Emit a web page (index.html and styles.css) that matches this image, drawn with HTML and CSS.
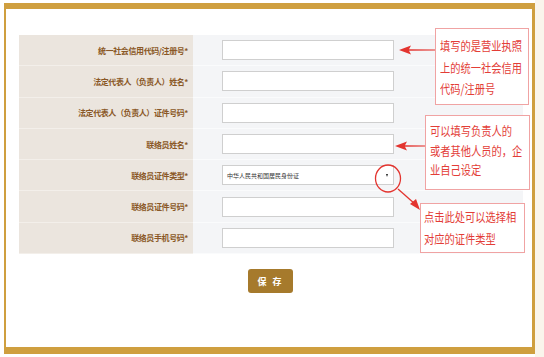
FILE: index.html
```html
<!DOCTYPE html>
<html lang="zh-CN">
<head>
  <meta charset="UTF-8" />
  <title>联络员信息</title>
  <link rel="stylesheet" href="styles.css">
</head>
<body>
  <div class="page">
    <div class="frame">
      <div class="form">
        <div class="row">
          <div class="label">统一社会信用代码/注册号*</div>
          <div class="field"><input type="text" class="text-input" /></div>
        </div>
        <div class="row">
          <div class="label">法定代表人（负责人）姓名*</div>
          <div class="field"><input type="text" class="text-input" /></div>
        </div>
        <div class="row">
          <div class="label">法定代表人（负责人）证件号码*</div>
          <div class="field"><input type="text" class="text-input" /></div>
        </div>
        <div class="row">
          <div class="label">联络员姓名*</div>
          <div class="field"><input type="text" class="text-input" /></div>
        </div>
        <div class="row">
          <div class="label">联络员证件类型*</div>
          <div class="field">
            <div class="select">
              <span>中华人民共和国居民身份证</span>
              <span class="caret"></span>
            </div>
          </div>
        </div>
        <div class="row">
          <div class="label">联络员证件号码*</div>
          <div class="field"><input type="text" class="text-input" /></div>
        </div>
        <div class="row">
          <div class="label">联络员手机号码*</div>
          <div class="field"><input type="text" class="text-input" /></div>
        </div>
      </div>
      <div class="actions">
        <button class="btn-save">保 存</button>
      </div>
    </div>

    <!-- 标注 -->
    <svg class="marks" width="544" height="357" viewBox="0 0 544 357">
      <polygon fill="#e3342f" points="399,50 411,45.5 409,49.3 435,49.6 435,50.6 409,50.8 411,54.5" />
      <polygon fill="#e3342f" points="395,146 407,141.5 405,145.3 425,145.6 425,146.6 405,146.8 407,150.5" />
      <ellipse cx="388" cy="178.5" rx="12.5" ry="13.5" fill="none" stroke="#e3342f" stroke-width="1.3" />
      <line x1="398" y1="189" x2="415" y2="204" stroke="#e3342f" stroke-width="1.3" />
      <polygon fill="#e3342f" points="420,210 410,204 416,199" />
    </svg>

    <div class="note note-1"><span>填写的是营业执照<br>上的统一社会信用<br>代码/注册号</span></div>
    <div class="note note-2"><span>可以填写负责人的<br>或者其他人员的，企<br>业自己设定</span></div>
    <div class="note note-3"><span>点击此处可以选择相<br>对应的证件类型</span></div>
  </div>
</body>
</html>
```

FILE: styles.css
```css
* {
  box-sizing: border-box;
}

body {
  margin: 0;
  background-color: #faf5ec;
  font-family: "Noto Sans CJK SC", "Noto Sans", sans-serif;
}

.page {
  position: relative;
  width: 535px;
  height: 357px;
  background-color: #fff;
  padding: 3px 0 0 4px;
}

.frame {
  width: 531px;
  height: 351px;
  border-style: solid;
  border-color: #cf9f3f;
  border-width: 6px 3px 7px 2px;
  padding-top: 26px;
}

.form {
  width: 504px;
  margin-left: 13px;
}

.row {
  display: grid;
  grid-template-columns: 174px 1fr;
  height: 31.3px;
}

.label {
  display: flex;
  align-items: center;
  justify-content: flex-end;
  padding-right: 5px;
  background-color: #ebe5de;
  border-bottom: 1px solid #f3efea;
  color: #8a5826;
  font-size: 8px;
  font-weight: bold;
  letter-spacing: -0.4px;
  white-space: nowrap;
}

.field {
  display: flex;
  align-items: center;
  padding-left: 29px;
  background-color: #f4f5f7;
  border-bottom: 1px solid #fafbfc;
}

.text-input {
  width: 172px;
  height: 20px;
  margin: 0;
  border: 1px solid #cfcfcf;
  background-color: #fff;
  padding: 0 4px;
}

.select {
  display: flex;
  align-items: center;
  justify-content: space-between;
  width: 172px;
  height: 20px;
  border: 1px solid #cfcfcf;
  background-color: #fff;
  padding: 0 4px 0 4px;
  font-size: 6px;
  color: #333;
}

.caret {
  width: 0;
  height: 0;
  border-top: 3px solid #222;
  border-left: 1.5px solid transparent;
  border-right: 1.5px solid transparent;
  margin-right: 1px;
}

.actions {
  display: flex;
  justify-content: center;
  padding-left: 3px;
  margin-top: 15px;
}

.btn-save {
  width: 45px;
  height: 24px;
  padding: 0;
  border: none;
  border-radius: 3px;
  background-color: #a67a2c;
  color: #fff;
  font-family: inherit;
  font-size: 9px;
  font-weight: bold;
  letter-spacing: 2px;
}

.marks {
  position: absolute;
  left: 0;
  top: 0;
}

.note {
  position: absolute;
  background-color: #fff;
  border: 1px solid #f0a3a3;
  color: #e33d37;
  font-size: 12.5px;
  white-space: nowrap;
  overflow: hidden;
}

.note span {
  display: inline-block;
  transform: scaleX(0.82);
  transform-origin: left top;
}

.note-1 {
  left: 435px;
  top: 28px;
  width: 94px;
  height: 77px;
  padding: 6px 0 0 4px;
  line-height: 21.7px;
}

.note-2 {
  left: 425px;
  top: 115px;
  width: 105px;
  height: 75px;
  padding: 5px 0 0 4px;
  line-height: 19.5px;
}

.note-3 {
  left: 420px;
  top: 203px;
  width: 105px;
  height: 50px;
  padding: 2px 0 0 3px;
  line-height: 22px;
}
```
